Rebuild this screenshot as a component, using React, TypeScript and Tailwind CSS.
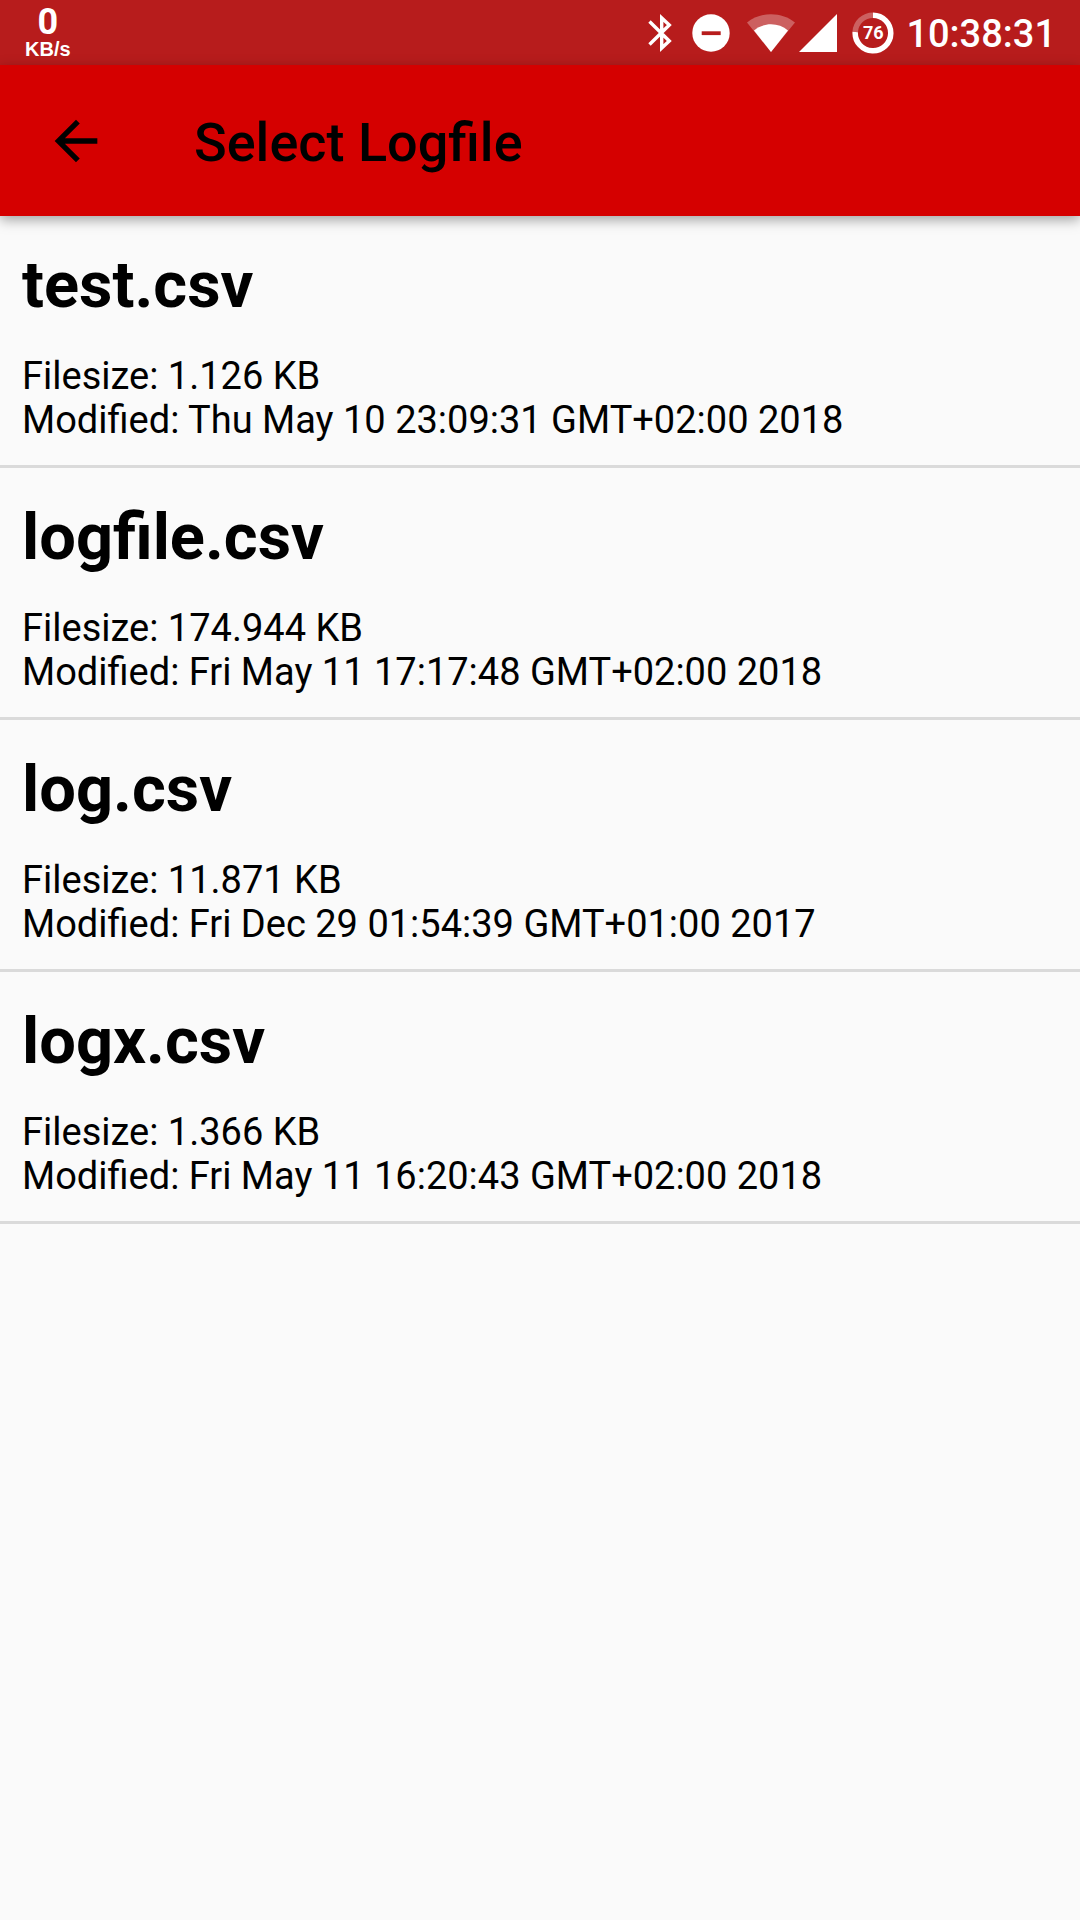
type LogFile = { name: string; size: string; modified: string };

const files: LogFile[] = [
  { name: 'test.csv', size: '1.126 KB', modified: 'Thu May 10 23:09:31 GMT+02:00 2018' },
  { name: 'logfile.csv', size: '174.944 KB', modified: 'Fri May 11 17:17:48 GMT+02:00 2018' },
  { name: 'log.csv', size: '11.871 KB', modified: 'Fri Dec 29 01:54:39 GMT+01:00 2017' },
  { name: 'logx.csv', size: '1.366 KB', modified: 'Fri May 11 16:20:43 GMT+02:00 2018' },
];

function BluetoothIcon() {
  return (
    <svg className="h-10 w-6" viewBox="0 0 24 40" fill="none" stroke="#fff" strokeWidth="3.4" aria-label="Bluetooth">
      <path d="M1.500 8.500 21.300 28 13.700 35V5L21.300 12 1.500 31.500" strokeMiterlimit="6" />
    </svg>
  );
}

function DoNotDisturbIcon() {
  return (
    <svg className="ml-5 size-[38px]" viewBox="0 0 38 38" aria-label="Do not disturb">
      <circle cx="19" cy="19" r="18.7" fill="#fff" />
      <path d="M9.7 17.3h19v3.8h-19z" fill="#b71c1c" />
    </svg>
  );
}

function WifiIcon() {
  return (
    <svg className="ml-[17px] h-[38px] w-12" viewBox="0 0 48 38" aria-label="Wi-Fi">
      <path d="M0 8.5C6.5 3.2 14.8.2 24 .2s17.500 3 24 8.300L24 38z" fill="#fff" fillOpacity=".3" />
      <path d="M7 16.500c4.800-4 10.600-6.200 17-6.200s12.200 2.200 17 6.200L24 38z" fill="#fff" />
    </svg>
  );
}

function SignalIcon() {
  return (
    <svg className="ml-1 size-[38px]" viewBox="0 0 38 38" aria-label="Mobile signal">
      <path d="M0 38 38 0v38z" fill="#fff" />
    </svg>
  );
}

function BatteryIcon() {
  return (
    <span className="relative ml-[15px] flex size-[42px] items-center justify-center">
      <svg className="absolute inset-0 size-full" viewBox="0 0 42 42" fill="none" stroke="#fff" strokeWidth="5.500" aria-hidden="true">
        <path d="M3.200 20A17.800 17.800 0 0 1 21 3.200" strokeOpacity=".3" />
        <path d="M21 3.200A17.800 17.800 0 1 1 3.200 20" />
      </svg>
      <span className="relative text-[18px] leading-none font-bold">76</span>
    </span>
  );
}

function StatusBar() {
  return (
    <div className="flex h-[65px] items-center justify-between bg-[#b71c1c] pr-6 pl-[25px] text-white">
      <div className="flex flex-col items-center pt-[3px] font-bold">
        <span className="text-[36px] leading-[30px]">0</span>
        <span className="font-['Liberation_Sans',sans-serif] text-[20px] leading-[24px]">KB/s</span>
      </div>
      <div className="flex items-center">
        <BluetoothIcon />
        <DoNotDisturbIcon />
        <WifiIcon />
        <SignalIcon />
        <BatteryIcon />
        <span className="ml-3 pt-0.5 text-[38px] leading-[44px] font-medium">10:38:31</span>
      </div>
    </div>
  );
}

function AppBar() {
  return (
    <header className="relative flex h-[151px] items-center bg-[#d50000] pl-10 shadow-[0_4px_12px_rgba(0,0,0,0.35)]">
      <button type="button" aria-label="Back" className="flex size-[72px] items-center justify-center">
        <svg className="size-16" viewBox="0 0 24 24" fill="#000" aria-hidden="true">
          <path d="M20 11H7.830l5.590-5.590L12 4l-8 8 8 8 1.410-1.410L7.830 13H20v-2z" />
        </svg>
      </button>
      <h1 className="ml-[82px] pt-1 text-[54px] leading-[64px] font-medium">Select Logfile</h1>
    </header>
  );
}

export default function App() {
  return (
    <div className="min-h-screen bg-[#fafafa] font-[Roboto,sans-serif] text-black">
      <StatusBar />
      <AppBar />
      <ul>
        {files.map((file) => (
          <li key={file.name} className="border-b-[3px] border-[#dadada] px-[22px] pt-[30px] pb-[23px]">
            <h2 className="text-[65px] leading-[78px] font-bold">{file.name}</h2>
            <p className="mt-[30px] text-[38px] leading-[44px]">Filesize: {file.size}</p>
            <p className="text-[38px] leading-[44px]">Modified: {file.modified}</p>
          </li>
        ))}
      </ul>
    </div>
  );
}
